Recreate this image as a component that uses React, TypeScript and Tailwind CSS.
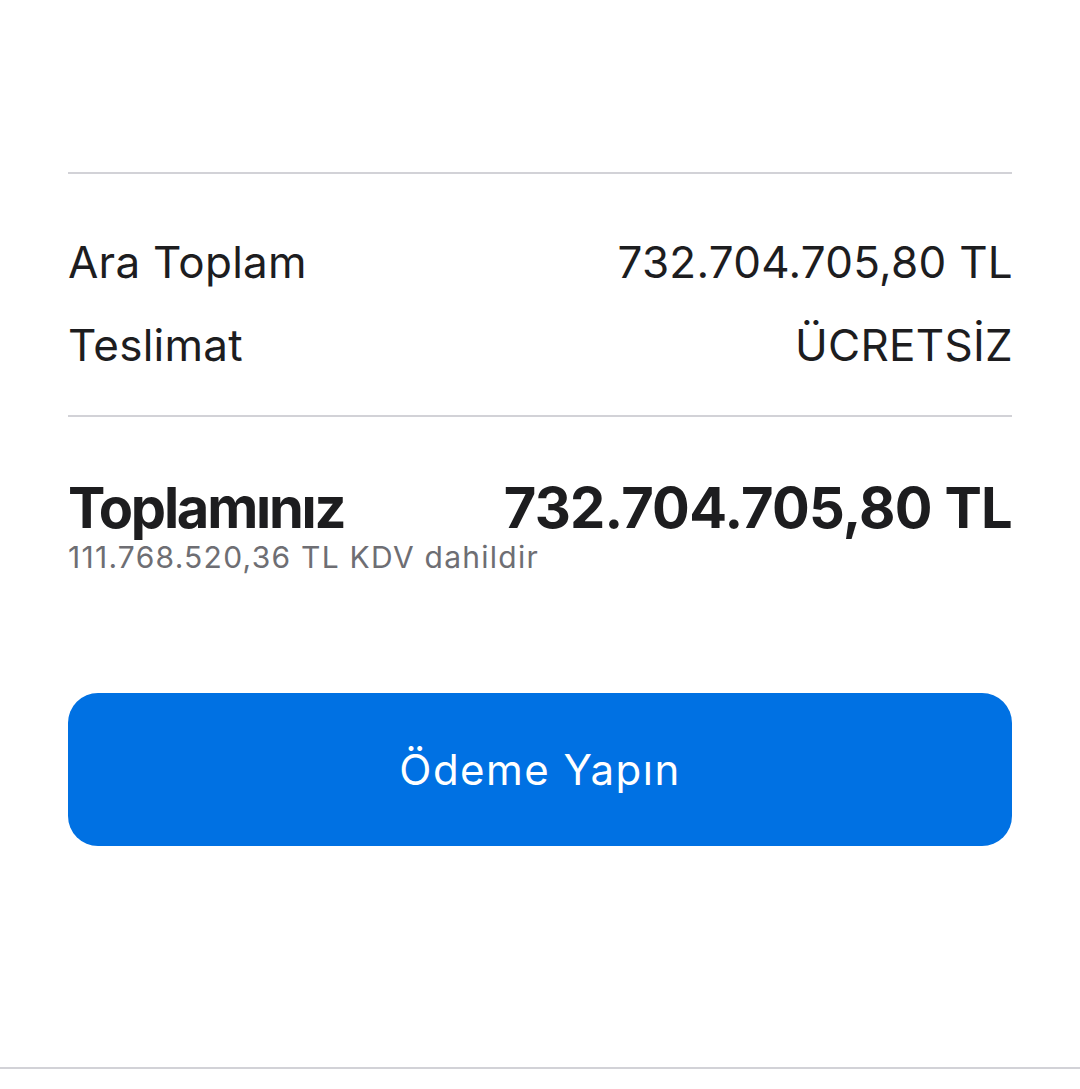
import React from "react";

export default function App() {
  const font = { fontFamily: "Inter, 'Noto Sans', sans-serif" };
  return (
    <div className="w-[1080px] h-[1089px] bg-white flex flex-col" style={font}>
      <div className="px-[68px] flex flex-col">
        <div className="h-[172px]" />
        <div className="h-[2px] bg-[#d2d2d7]" />
        <div className="pt-[47px] pb-[28px] text-[44px] leading-[83px] tracking-[0.006em] text-[#1d1d1f]">
          <div className="flex justify-between">
            <span>Ara Toplam</span>
            <span className="mr-[-1px]">732.704.705,80 TL</span>
          </div>
          <div className="flex justify-between">
            <span>Teslimat</span>
            <span className="mr-[-1px]">ÜCRETSİZ</span>
          </div>
        </div>
        <div className="h-[2px] bg-[#d2d2d7]" />
        <div className="pt-[61px] flex justify-between text-[56px] leading-[60px] font-bold text-[#1d1d1f]">
          <span className="tracking-[-0.04em]">Toplamınız</span>
          <span className="tracking-[-0.013em]">732.704.705,80 TL</span>
        </div>
        <div className="pt-[1px] text-[30px] leading-[36px] tracking-[0.042em] text-[#6e6e73]">
          111.768.520,36 TL KDV dahildir
        </div>
        <button className="mt-[118px] h-[153px] rounded-[30px] bg-[#0071e3] text-white text-[42px] tracking-[0.035em] flex items-center justify-center">
          Ödeme Yapın
        </button>
      </div>
      <div className="mt-[221px] h-[2px] bg-[#d2d2d7]" />
    </div>
  );
}
